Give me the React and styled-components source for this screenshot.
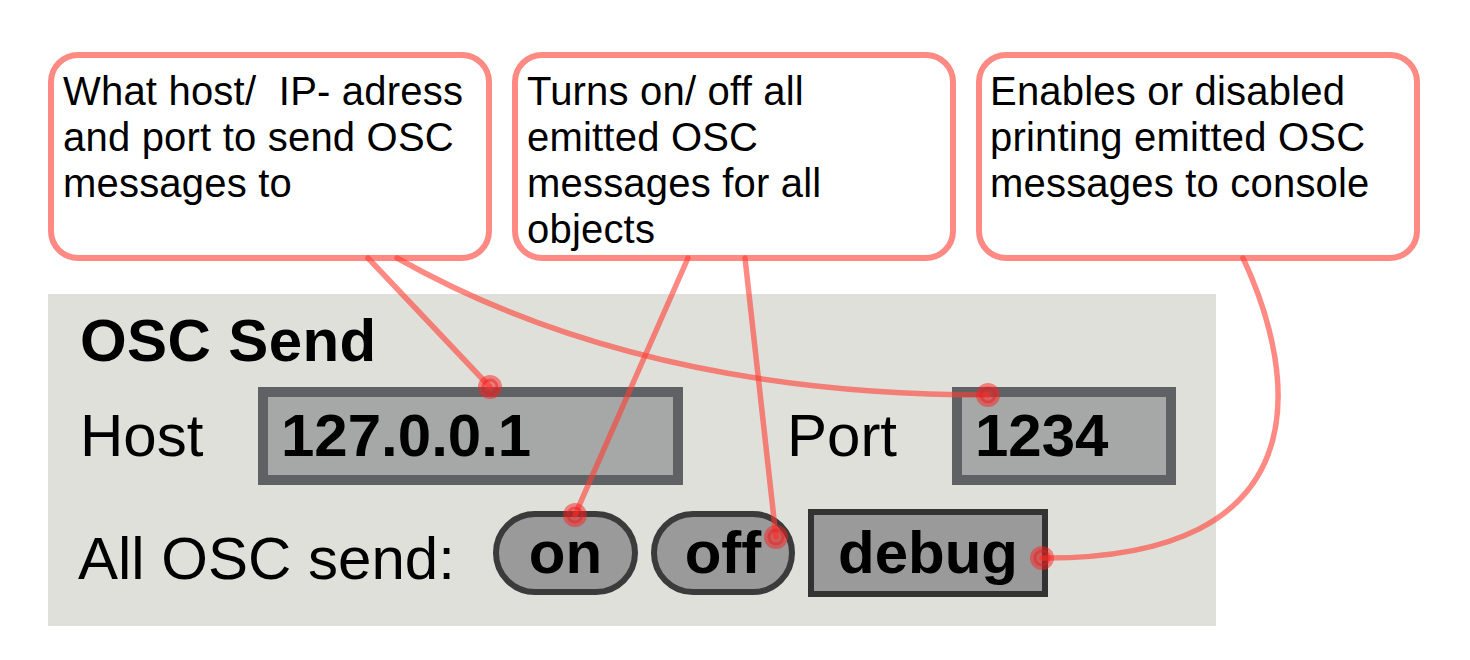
import React from 'react'
import styled, { createGlobalStyle } from 'styled-components'

const Global = createGlobalStyle`
  body {
    margin: 0;
    background: #fff;
    font-family: "Liberation Sans", Arial, Helvetica, sans-serif;
    color: #000;
  }
`

const Page = styled.div`
  position: relative;
  width: 1470px;
  height: 660px;
  overflow: hidden;
`

const Callouts = styled.div`
  display: flex;
  gap: 20px;
  padding: 52px 0 0 48px;
`

const Callout = styled.div`
  box-sizing: border-box;
  width: 444px;
  height: 209px;
  border: 6px solid #ff8a84;
  border-radius: 30px;
  background: #fff;
  padding: 10px 8px 0 ${p => p.$pad || 9}px;
  font-size: 40px;
  line-height: 46px;
  letter-spacing: 0.2px;
`

const Line = styled.span`
  display: block;
  white-space: pre;
`

const Panel = styled.div`
  box-sizing: border-box;
  margin: 33px 0 0 48px;
  width: 1168px;
  height: 332px;
  background: #dfe0da;
  padding: 17px 30px 0 32px;
`

const Title = styled.div`
  font-size: 60px;
  font-weight: bold;
  line-height: 60px;
  letter-spacing: 0.4px;
`

const Row = styled.div`
  display: flex;
  align-items: center;
  height: ${p => p.$h}px;
  margin-top: ${p => p.$mt}px;
`

const Label = styled.div`
  box-sizing: border-box;
  font-size: 60px;
  line-height: 60px;
  width: ${p => p.$w}px;
  margin-left: ${p => p.$ml || 0}px;
  padding-top: ${p => p.$pt || 0}px;
  white-space: nowrap;
`

const Field = styled.div`
  box-sizing: border-box;
  width: ${p => p.$w}px;
  height: 98px;
  border: 10px solid #606165;
  background: #a5a8a6;
  padding-left: 13px;
  font-size: 60px;
  font-weight: bold;
  line-height: 78px;
`

const Button = styled.div`
  box-sizing: border-box;
  width: ${p => p.$w}px;
  height: ${p => (p.$pill ? 84 : 88)}px;
  margin-right: 13px;
  border: 6px solid ${p => (p.$pill ? '#3b3b3b' : '#333')};
  border-radius: ${p => (p.$pill ? '42px' : '0')};
  background: #9a9a9a;
  text-align: center;
  font-size: 60px;
  font-weight: bold;
  line-height: ${p => (p.$pill ? 72 : 76)}px;
`

const Wires = styled.svg`
  position: absolute;
  top: 0;
  left: 0;
  pointer-events: none;
`

const wire = 'rgba(255,60,50,0.6)'

const Dot = ({ x, y }) => (
  <g>
    <circle cx={x} cy={y} r="12" fill="rgba(255,30,30,0.5)" />
    <circle cx={x} cy={y} r="7" fill="none" stroke="rgba(225,30,30,0.45)" strokeWidth="3" />
  </g>
)

const notes = [
  { lines: ['What host/  IP- adress', 'and port to send OSC', 'messages to'], pad: 9 },
  { lines: ['Turns on/ off all', 'emitted OSC', 'messages for all', 'objects'], pad: 9 },
  { lines: ['Enables or disabled', 'printing emitted OSC', 'messages to console'], pad: 8 },
]

export default function App() {
  return (
    <Page>
      <Global />
      <Callouts>
        {notes.map((n, i) => (
          <Callout key={i} $pad={n.pad}>
            {n.lines.map(l => (
              <Line key={l}>{l}</Line>
            ))}
          </Callout>
        ))}
      </Callouts>

      <Panel>
        <Title>OSC Send</Title>
        <Row $h={98} $mt={16}>
          <Label $w={178}>Host</Label>
          <Field $w={425}>127.0.0.1</Field>
          <Label $w={165} $ml={104}>Port</Label>
          <Field $w={224}>1234</Field>
        </Row>
        <Row $h={88} $mt={24}>
          <Label $w={415} $ml={-2} $pt={12}>All OSC send:</Label>
          <Button $pill $w={145}>on</Button>
          <Button $pill $w={144}>off</Button>
          <Button $w={240}>debug</Button>
        </Row>
      </Panel>

      <Wires width="1470" height="660" viewBox="0 0 1470 660">
        <g fill="none" stroke={wire} strokeWidth="5.5" strokeLinecap="round">
          <path d="M368 258 L490 387" />
          <path d="M397 258 C560 350 760 395 988 395" />
          <path d="M688 258 L575 515" />
          <path d="M745 258 L776 537" />
          <path d="M1243 258 C1300 380 1320 560 1042 558" />
        </g>
        <Dot x={490} y={387} />
        <Dot x={988} y={395} />
        <Dot x={575} y={515} />
        <Dot x={776} y={537} />
        <Dot x={1042} y={558} />
      </Wires>
    </Page>
  )
}
